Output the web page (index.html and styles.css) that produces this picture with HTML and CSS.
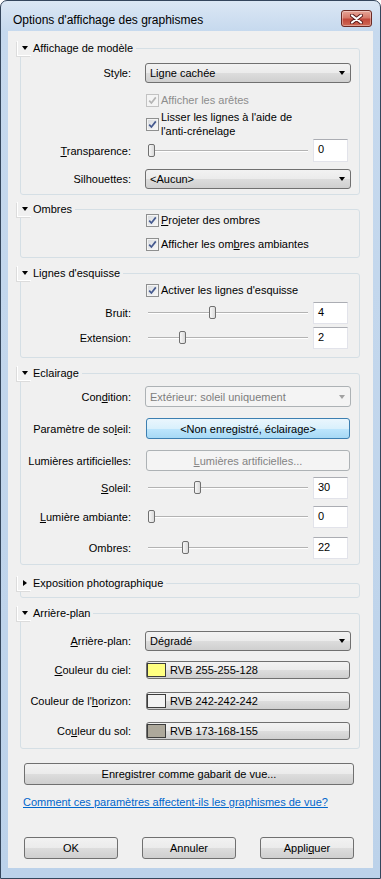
FILE: index.html
```html
<!DOCTYPE html>
<html lang="fr">
<head>
  <meta charset="UTF-8" />
  <meta name="viewport" content="width=device-width, initial-scale=1.0" />
  <title>Options d'affichage des graphismes</title>
  <link rel="stylesheet" href="styles.css">
</head>
<body>
  <div class="window">
    <div class="titlebar">
      <span class="title">Options d'affichage des graphismes</span>
      <span class="close">
        <svg width="13" height="10" viewBox="0 0 13 10">
          <path d="M2 1.5 L11 8.5 M11 1.5 L2 8.5" stroke="#5a1c1c" stroke-width="4" stroke-linecap="round" />
          <path d="M2 1.5 L11 8.5 M11 1.5 L2 8.5" stroke="#fff" stroke-width="2.2" stroke-linecap="round" />
        </svg>
      </span>
    </div>

    <div class="client">
      <!-- Affichage de modèle -->
      <fieldset class="group g-model">
        <legend><span class="toggle"></span>Affichage de modèle</legend>
        <div class="row r-style">
          <span class="label">Style:</span>
          <div class="combo">Ligne cachée<span class="arrow"></span></div>
        </div>
        <div class="check-row r-edges disabled">
          <span class="cb"><svg width="11" height="11" viewBox="0 0 11 11"><path d="M2.2 5.6 L4.4 8 L8.8 2.4" /></svg></span>
          Afficher les arêtes
        </div>
        <div class="check-row r-smooth">
          <span class="cb"><svg width="11" height="11" viewBox="0 0 11 11"><path d="M2.2 5.6 L4.4 8 L8.8 2.4" /></svg></span>
          <span>Lisser les lignes à l'aide de<br>l'anti-crénelage</span>
        </div>
        <div class="row r-transp">
          <span class="label"><u>T</u>ransparence:</span>
          <div class="slider"><span class="thumb" style="--v:0"></span></div>
          <div class="num">0</div>
        </div>
        <div class="row r-silh">
          <span class="label">Silhouettes:</span>
          <div class="combo">&lt;Aucun&gt;<span class="arrow"></span></div>
        </div>
      </fieldset>

      <!-- Ombres -->
      <fieldset class="group g-shadow">
        <legend><span class="toggle"></span>Ombres</legend>
        <div class="check-row r-cast">
          <span class="cb"><svg width="11" height="11" viewBox="0 0 11 11"><path d="M2.2 5.6 L4.4 8 L8.8 2.4" /></svg></span>
          <span><u>P</u>rojeter des ombres</span>
        </div>
        <div class="check-row r-ambient">
          <span class="cb"><svg width="11" height="11" viewBox="0 0 11 11"><path d="M2.2 5.6 L4.4 8 L8.8 2.4" /></svg></span>
          <span>Afficher les om<u>b</u>res ambiantes</span>
        </div>
      </fieldset>

      <!-- Lignes d'esquisse -->
      <fieldset class="group g-sketch">
        <legend><span class="toggle"></span>Lignes d'esquisse</legend>
        <div class="check-row r-sketch-on">
          <span class="cb"><svg width="11" height="11" viewBox="0 0 11 11"><path d="M2.2 5.6 L4.4 8 L8.8 2.4" /></svg></span>
          Activer les lignes d'esquisse
        </div>
        <div class="row r-noise">
          <span class="label">Bruit:</span>
          <div class="slider"><span class="thumb" style="--v:0.4"></span></div>
          <div class="num sm">4</div>
        </div>
        <div class="row r-ext">
          <span class="label">Extension:</span>
          <div class="slider"><span class="thumb" style="--v:0.2"></span></div>
          <div class="num sm">2</div>
        </div>
      </fieldset>

      <!-- Eclairage -->
      <fieldset class="group g-light">
        <legend><span class="toggle"></span>Eclairage</legend>
        <div class="row r-cond">
          <span class="label">Con<u>d</u>ition:</span>
          <div class="combo off">Extérieur: soleil uniquement<span class="arrow"></span></div>
        </div>
        <div class="row r-sun-set">
          <span class="label">Paramètre de so<u>l</u>eil:</span>
          <div class="btn wide hot">&lt;Non enregistré, éclairage&gt;</div>
        </div>
        <div class="row r-art">
          <span class="label">Lumières artificielles:</span>
          <div class="btn wide off"><span><u>L</u>umières artificielles...</span></div>
        </div>
        <div class="row r-sun">
          <span class="label"><u>S</u>oleil:</span>
          <div class="slider"><span class="thumb" style="--v:0.3"></span></div>
          <div class="num sm">30</div>
        </div>
        <div class="row r-amb">
          <span class="label"><u>L</u>umière ambiante:</span>
          <div class="slider"><span class="thumb" style="--v:0"></span></div>
          <div class="num sm">0</div>
        </div>
        <div class="row r-shd">
          <span class="label">Ombres:</span>
          <div class="slider"><span class="thumb" style="--v:0.22"></span></div>
          <div class="num sm">22</div>
        </div>
      </fieldset>

      <!-- Exposition photographique -->
      <fieldset class="group g-expo">
        <legend><span class="toggle closed"></span>Exposition photographique</legend>
      </fieldset>

      <!-- Arrière-plan -->
      <fieldset class="group g-bg">
        <legend><span class="toggle"></span>Arrière-plan</legend>
        <div class="row r-bgtype">
          <span class="label"><u>A</u>rrière-plan:</span>
          <div class="combo">Dégradé<span class="arrow"></span></div>
        </div>
        <div class="row r-sky">
          <span class="label"><u>C</u>ouleur du ciel:</span>
          <div class="btn wide color"><span class="swatch" style="background:#ffff80"></span>RVB 255-255-128</div>
        </div>
        <div class="row r-horizon">
          <span class="label">Couleur de l'<u>h</u>orizon:</span>
          <div class="btn wide color"><span class="swatch" style="background:#f2f2f2"></span>RVB 242-242-242</div>
        </div>
        <div class="row r-ground">
          <span class="label">Co<u>u</u>leur du sol:</span>
          <div class="btn wide color"><span class="swatch" style="background:#ada89b"></span>RVB 173-168-155</div>
        </div>
      </fieldset>

      <div class="btn save">Enregistrer comme gabarit de vue...</div>
      <a class="help" href="#">Comment ces paramètres affectent-ils les graphismes de vue?</a>

      <div class="actions">
        <div class="btn">OK</div>
        <div class="btn">Annuler</div>
        <div class="btn">Appli<u>q</u>uer</div>
      </div>
    </div>
  </div>
</body>
</html>
```

FILE: styles.css
```css
* { box-sizing: border-box; }
html, body { margin: 0; }
body { font-family: "Liberation Sans", Arial, sans-serif; font-size: 11px; color: #000; background: #fff; }

.window { width: 381px; height: 879px; border: 1px solid #34465c; border-radius: 7px 7px 0 0; overflow: hidden;
  background: linear-gradient(#dbe7f4, #c6d9ee 30px, #bcd2ea); }
.titlebar { height: 30px; display: flex; justify-content: space-between; align-items: flex-start; padding: 9px 8px 0 12px; }
.title { font-size: 12px; line-height: 16px; margin-top: 2px; }
.close { width: 31px; height: 17px; border: 1px solid #6b2a24; border-radius: 3px; display: flex; align-items: center; justify-content: center;
  background: linear-gradient(#e7a597, #d67a6a 45%, #c2483a 55%, #cf6a56);
  box-shadow: inset 0 0 0 1px rgba(255,255,255,0.35); }

.client { margin: 0 7px; background: #f0f0f0; padding: 9px 0 9px; }

.group { margin: 0 13px 0 12px; padding: 0 0 5px; border: 1px solid #d5dfe5; border-radius: 3px; min-width: 0; }
.group legend { padding: 0 3px 0 0; margin-left: -4px; height: 16px; line-height: 16px; display: flex; align-items: center; }
.toggle { width: 14px; height: 15px; margin-right: 2px; border-left: 1px solid #fff; border-bottom: 1px solid #fff;
  display: flex; align-items: center; justify-content: center; box-shadow: -1px 1px 0 #dcdcdc; }
.toggle::before { content: ""; border-top: 4px solid #000; border-left: 3px solid transparent; border-right: 3px solid transparent; }
.toggle.closed::before { border-top: 3px solid transparent; border-bottom: 3px solid transparent; border-left: 4px solid #000; border-right: 0; }

.g-shadow { margin-top: 6px; padding-bottom: 6px; }
.g-sketch { margin-top: 7px; padding-bottom: 8px; }
.g-light { margin-top: 7px; padding-bottom: 5px; }
.g-expo { margin-top: 10px; padding-bottom: 6px; }
.g-bg { margin-top: 7px; padding-bottom: 8px; }

.row { display: flex; align-items: center; }
.label { width: 110px; margin-right: 14px; text-align: right; flex: none; white-space: nowrap; }

.check-row { display: flex; align-items: center; padding-left: 125px; min-height: 14px; line-height: 14px; }
.cb { width: 13px; height: 13px; margin-right: 2px; flex: none; border: 1px solid #8e8f8f; display: flex; align-items: center; justify-content: center;
  background: linear-gradient(135deg, #d6d9dd, #f9f9f9); box-shadow: inset 0 0 0 1px #f4f4f4; }
.cb path { fill: none; stroke: #45598f; stroke-width: 1.7; }
.disabled { color: #8d8d8d; }
.disabled .cb { border-color: #c2c2c2; background: #f4f4f4; }
.disabled .cb path { stroke: #b4b4b4; }

.r-style { margin-top: 7px; }
.r-edges { margin-top: 10px; }
.r-smooth { margin-top: 3px; }
.r-transp { margin-top: 1px; }
.r-silh { margin-top: 7px; }
.r-cast { margin-top: -4px; }
.r-ambient { margin-top: 10px; }
.r-sketch-on { margin-top: 2px; }
.r-noise { margin-top: 5px; }
.r-ext { margin-top: 3px; }
.r-cond { margin-top: 5px; }
.r-sun-set { margin-top: 11px; }
.r-art { margin-top: 11px; }
.r-sun { margin-top: 6px; }
.r-amb { margin-top: 7px; }
.r-shd { margin-top: 9px; }
.r-bgtype { margin-top: 10px; }
.r-sky { margin-top: 10px; }
.r-horizon { margin-top: 13px; }
.r-ground { margin-top: 12px; }

.combo { width: 206px; height: 20px; border: 1px solid #707070; border-radius: 3px; padding-left: 4px; display: flex; align-items: center;
  background: linear-gradient(#f2f2f2, #ebebeb 50%, #dddddd 50%, #cfcfcf); }
.combo .arrow { margin-left: auto; margin-right: 5px; border-top: 4px solid #000; border-left: 3.5px solid transparent; border-right: 3.5px solid transparent; }
.combo.off { height: 21px; color: #7d7d7d; border-color: #adb2b5; background: #f4f4f4; }
.combo.off .arrow { border-top-color: #a2a2a2; }

.slider { position: relative; width: 160px; height: 14px; margin: 0 5px 0 3px; flex: none;
  background: linear-gradient(#b3b3b3, #b3b3b3) 0 6px / 100% 1px no-repeat, linear-gradient(#fff, #fff) 0 7px / 100% 1px no-repeat; }
.thumb { position: absolute; top: 0; left: calc(var(--v) * 153px); width: 7px; height: 13px; border: 1px solid #707070; border-radius: 2px;
  background: linear-gradient(90deg, #f7f7f7, #dadada); }

.num { width: 35px; height: 23px; background: #fff; padding: 2px 0 0 4px; line-height: 14px; flex: none;
  border: 1px solid #e2e3ea; border-top-color: #abadb3; }
.num.sm { height: 22px; }

.btn { height: 22px; border: 1px solid #707070; border-radius: 3px; display: flex; align-items: center; justify-content: center;
  background: linear-gradient(#f2f2f2, #ebebeb 50%, #dddddd 50%, #cfcfcf); }
.btn.wide { width: 204px; height: 21px; margin-left: 1px; }
.btn.hot { border-color: #3c7fb1; background: linear-gradient(#eaf6fd, #d9f0fc 50%, #bee6fd 50%, #a7d9f5); }
.btn.off { color: #838383; border-color: #adb2b5; background: #f4f4f4; }
.btn.color { height: 18px; justify-content: flex-start; }
.swatch { width: 19px; height: 14px; margin-right: 4px; border: 1px solid #3c3c3c; flex: none; }

.btn.save { margin: 14px 19px 0 16px; }
.help { display: block; margin: 10px 0 0 15px; line-height: 14px; color: #0066cc; text-decoration: underline; }
.actions { display: flex; justify-content: space-between; margin: 28px 19px 0 16px; }
.actions .btn { width: 94px; }
```
